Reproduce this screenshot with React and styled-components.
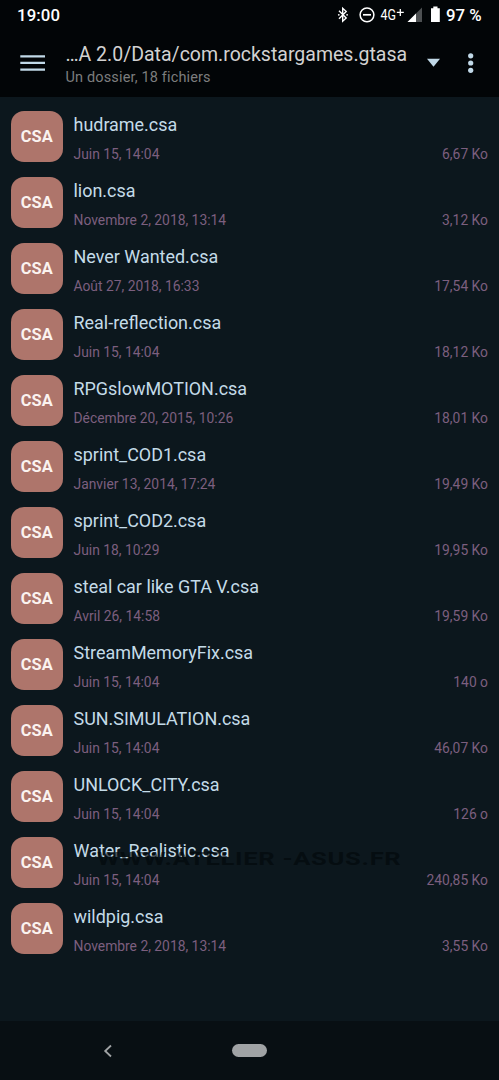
import React from "react";
import styled, { createGlobalStyle } from "styled-components";

const GlobalStyle = createGlobalStyle`
  * { box-sizing: border-box; }
  body { margin: 0; background: #0c171d; font-family: Roboto, "Liberation Sans", sans-serif; }
`;

const Screen = styled.div`
  position: relative;
  display: flex;
  flex-direction: column;
  width: 499px;
  height: 1080px;
  overflow: hidden;
  background: #0c171d;
`;

const Header = styled.header`
  height: 97px;
  background: #020507;
`;

const StatusBar = styled.div`
  display: flex;
  align-items: center;
  justify-content: space-between;
  height: 30px;
  padding: 0 16px 0 17px;
  color: #fff;
`;

const Clock = styled.span`
  font-size: 16.8px;
  font-weight: 500;
  line-height: 30px;
  letter-spacing: 0.1px;
`;

const StatusIcons = styled.svg`
  display: block;
  width: 109px;
  height: 30px;
  flex: none;
`;

const StatusGroup = styled.div`
  display: flex;
  align-items: center;
`;

const Percent = styled.span`
  width: 37px;
  font-size: 16.8px;
  font-weight: 500;
  line-height: 30px;
  white-space: nowrap;
`;

const Toolbar = styled.div`
  display: flex;
  height: 67px;
  padding: 12px 24px 0 20px;
`;

const MenuIcon = styled.svg`
  display: block;
  width: 26px;
  height: 44px;
  margin-right: 19.5px;
  flex: none;
`;

const Titles = styled.div`
  flex: 1;
  min-width: 0;
  padding-top: 1px;
  white-space: nowrap;
`;

const Title = styled.div`
  color: #d2d2d2;
  font-size: 19.5px;
  line-height: 24px;
`;

const Subtitle = styled.div`
  color: #7c7d7e;
  font-size: 14.5px;
  line-height: 21px;
  letter-spacing: 0.15px;
`;

const ToolbarActions = styled.svg`
  display: block;
  width: 50px;
  height: 44px;
  flex: none;
`;

const List = styled.main`
  flex: 1;
  padding-top: 6px;
`;

const Row = styled.div`
  display: flex;
  height: 66px;
  padding: 7.5px 11px 0 11px;
`;

const Badge = styled.div`
  width: 51.5px;
  height: 51.5px;
  margin-right: 11px;
  border-radius: 13px;
  background: #ae756b;
  color: #fbf3f0;
  font-size: 16.4px;
  font-weight: 700;
  line-height: 52px;
  text-align: center;
  flex: none;
`;

const Info = styled.div`
  flex: 1;
  min-width: 0;
`;

const Name = styled.div`
  color: #c4dbe8;
  font-size: 17.95px;
  line-height: 27px;
  white-space: nowrap;
`;

const Meta = styled.div`
  display: flex;
  justify-content: space-between;
  margin-top: 6.5px;
  color: #7c5f7f;
  font-size: 13.85px;
  line-height: 20px;
`;

const NavBar = styled.nav`
  display: flex;
  align-items: center;
  height: 59px;
  padding-left: 103px;
  background: #080f13;
`;

const BackIcon = styled.svg`
  display: block;
  width: 10px;
  height: 14px;
`;

const HomePill = styled.div`
  width: 35px;
  height: 12.5px;
  margin-left: 119px;
  border-radius: 7px;
  background: #a0a3a5;
`;

const Watermark = styled.div`
  position: absolute;
  left: 97px;
  top: 849px;
  color: rgba(2, 7, 10, 0.65);
  font-size: 19.2px;
  font-weight: 700;
  line-height: 20px;
  letter-spacing: 0.5px;
  white-space: nowrap;
  transform: scaleX(1.335);
  transform-origin: left;
`;

const files = [
  ["hudrame.csa", "Juin 15, 14:04", "6,67 Ko"],
  ["lion.csa", "Novembre 2, 2018, 13:14", "3,12 Ko"],
  ["Never Wanted.csa", "Août 27, 2018, 16:33", "17,54 Ko"],
  ["Real-reflection.csa", "Juin 15, 14:04", "18,12 Ko"],
  ["RPGslowMOTION.csa", "Décembre 20, 2015, 10:26", "18,01 Ko"],
  ["sprint_COD1.csa", "Janvier 13, 2014, 17:24", "19,49 Ko"],
  ["sprint_COD2.csa", "Juin 18, 10:29", "19,95 Ko"],
  ["steal car like GTA V.csa", "Avril 26, 14:58", "19,59 Ko"],
  ["StreamMemoryFix.csa", "Juin 15, 14:04", "140 o"],
  ["SUN.SIMULATION.csa", "Juin 15, 14:04", "46,07 Ko"],
  ["UNLOCK_CITY.csa", "Juin 15, 14:04", "126 o"],
  ["Water_Realistic.csa", "Juin 15, 14:04", "240,85 Ko"],
  ["wildpig.csa", "Novembre 2, 2018, 13:14", "3,55 Ko"],
];

export default function App() {
  return (
    <>
      <GlobalStyle />
      <Screen>
        <Header>
          <StatusBar>
            <Clock>19:00</Clock>
            <StatusGroup>
              <StatusIcons viewBox="337 0 109 30">
                <path d="M339 10.8l7.2 7.2-3.5 3.2V8.3l3.5 3.2L339 18.7" fill="none" stroke="#fff" strokeWidth="1.4" />
                <circle cx="338.8" cy="14.8" r="0.9" fill="#fff" />
                <circle cx="347.1" cy="14.8" r="0.9" fill="#fff" />
                <circle cx="367" cy="14.8" r="6.9" fill="none" stroke="#fff" strokeWidth="1.5" />
                <path d="M363 14.8h8" stroke="#fff" strokeWidth="1.7" />
                <text x="380.5" y="19.6" fill="#fff" fontSize="14.5" textLength="15.5" lengthAdjust="spacingAndGlyphs">4G</text>
                <path d="M396.8 12.4h7M400.3 8.9v7" stroke="#fff" strokeWidth="1.3" />
                <path d="M407.5 22L422 7.5V22z" fill="#4d5052" />
                <path d="M407.5 22L416 13.5V22z" fill="#fff" />
                <path d="M431 8.3h2.3V6.4h4.2v1.9h2.3V22H431z" fill="#fff" />
              </StatusIcons>
              <Percent>97 %</Percent>
            </StatusGroup>
          </StatusBar>
          <Toolbar>
            <MenuIcon viewBox="20 42 26 44">
              <path d="M20.3 56.3H45M20.3 62.9H45M20.3 69.6H45" stroke="#c1d9e8" strokeWidth="2.3" />
            </MenuIcon>
            <Titles>
              <Title>…A 2.0/Data/com.rockstargames.gtasa</Title>
              <Subtitle>Un dossier, 18 fichiers</Subtitle>
            </Titles>
            <ToolbarActions viewBox="425 42 50 44">
              <path d="M427 58.8h13l-6.5 8z" fill="#c1d9e8" />
              <circle cx="470.7" cy="55.8" r="2.6" fill="#c1d9e8" />
              <circle cx="470.7" cy="63" r="2.6" fill="#c1d9e8" />
              <circle cx="470.7" cy="70.3" r="2.6" fill="#c1d9e8" />
            </ToolbarActions>
          </Toolbar>
        </Header>
        <List>
          {files.map(([name, date, size]) => (
            <Row key={name}>
              <Badge>CSA</Badge>
              <Info>
                <Name>{name}</Name>
                <Meta>
                  <span>{date}</span>
                  <span>{size}</span>
                </Meta>
              </Info>
            </Row>
          ))}
        </List>
        <NavBar>
          <BackIcon viewBox="0 0 10 14">
            <path d="M8 1.5L2.2 7 8 12.5" fill="none" stroke="#a0a3a5" strokeWidth="1.8" />
          </BackIcon>
          <HomePill />
        </NavBar>
        <Watermark>WWW.ATELIER -ASUS.FR</Watermark>
      </Screen>
    </>
  );
}
